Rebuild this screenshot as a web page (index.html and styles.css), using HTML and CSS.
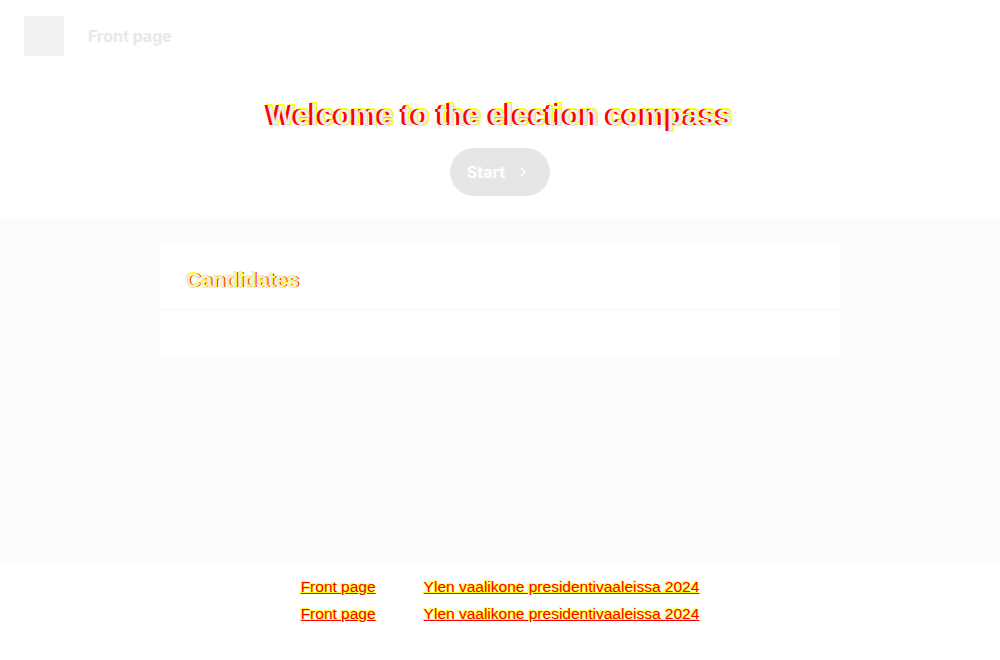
FILE: index.html
```html
<!DOCTYPE html>
<html lang="en">
<head>
<meta charset="utf-8">
<title>Election compass</title>
<link rel="stylesheet" href="styles.css">
</head>
<body>
<header class="topbar">
  <div class="logo"></div>
  <a class="nav-link" href="#">Front page</a>
</header>
<section class="hero">
  <h1 class="hero-title">Welcome to the election compass</h1>
  <button class="start-btn" type="button">
    <span>Start</span>
    <svg class="chev" width="12" height="12" viewBox="0 0 12 12" aria-hidden="true"><path d="M4 2l4 4-4 4" fill="none" stroke="#ffffff" stroke-width="1.6" stroke-linecap="round" stroke-linejoin="round"/></svg>
  </button>
</section>
<main class="content">
  <div class="card">
    <div class="card-head"><h2 class="card-title">Candidates</h2></div>
    <div class="card-body"></div>
  </div>
</main>
<footer class="footer">
  <div class="footer-row">
    <a class="foot-link" href="#">Front page</a>
    <a class="foot-link" href="#">Ylen vaalikone presidentivaaleissa 2024</a>
  </div>
  <div class="footer-row">
    <a class="foot-link" href="#">Front page</a>
    <a class="foot-link" href="#">Ylen vaalikone presidentivaaleissa 2024</a>
  </div>
</footer>
</body>
</html>
```

FILE: styles.css
```css
* { box-sizing: border-box; }
html, body { margin: 0; padding: 0; }
body {
  width: 1000px;
  height: 660px;
  display: flex;
  flex-direction: column;
  background: #ffffff;
  font-family: "Liberation Sans", Arial, sans-serif;
  -webkit-font-smoothing: none;
}
.topbar {
  height: 72px;
  display: flex;
  align-items: center;
  gap: 24px;
  padding: 0 24px;
  background: #ffffff;
}
.logo {
  width: 40px;
  height: 40px;
  background: #f1f1f1;
  border-radius: 2px;
}
.nav-link {
  font-family: Inter, "Liberation Sans", sans-serif;
  font-weight: 700;
  font-size: 16px;
  color: #e8e8e8;
  text-decoration: none;
}
.hero {
  height: 146px;
  display: flex;
  flex-direction: column;
  align-items: center;
  padding-top: 26px;
  background: #ffffff;
}
.hero-title {
  margin: 0;
  font-size: 29px;
  line-height: 34px;
  font-weight: 700;
  color: #ececec;
  text-shadow: -3px 0 #ff0000, -2px 0 #ff0000, -1px 0 #ff0000, 1px 1px #ffff00, -1px -1px #ffff00, 1px -1px #ffff00;
}
.start-btn {
  margin-top: 16px;
  width: 100px;
  height: 48px;
  border: 0;
  border-radius: 24px;
  background: #e6e6e6;
  display: flex;
  align-items: center;
  justify-content: center;
  gap: 12px;
  padding: 0 4px 0 0;
  font-family: Inter, "Liberation Sans", sans-serif;
  font-weight: 700;
  font-size: 16px;
  color: #ffffff;
}
.chev { display: block; }
.content {
  flex: 1;
  background: #fcfcfc;
  padding: 26px 160px 0;
}
.card {
  background: #ffffff;
  border-radius: 4px;
}
.card-head {
  height: 66px;
  display: flex;
  align-items: center;
  padding: 6px 25px 0;
  border-bottom: 1px solid #f7f7f7;
}
.card-title {
  margin: 0;
  font-size: 21px;
  font-weight: 700;
  color: #ececec;
  text-shadow: 1px 0 #ffff00, 2px 0 #ff0000, 0 -1px #ffff00, 1px 1px #ffff00;
}
.card-body { height: 48px; }
.footer {
  height: 95px;
  display: flex;
  flex-direction: column;
  align-items: center;
  padding-top: 12px;
  gap: 8px;
  background: #ffffff;
}
.footer-row {
  display: flex;
  gap: 48px;
}
.foot-link {
  font-size: 15.5px;
  line-height: 19px;
  color: #ff0000;
  text-decoration: underline;
  text-shadow: -1px -1px #ffff00, 1px 0 #ffff00;
}
```
